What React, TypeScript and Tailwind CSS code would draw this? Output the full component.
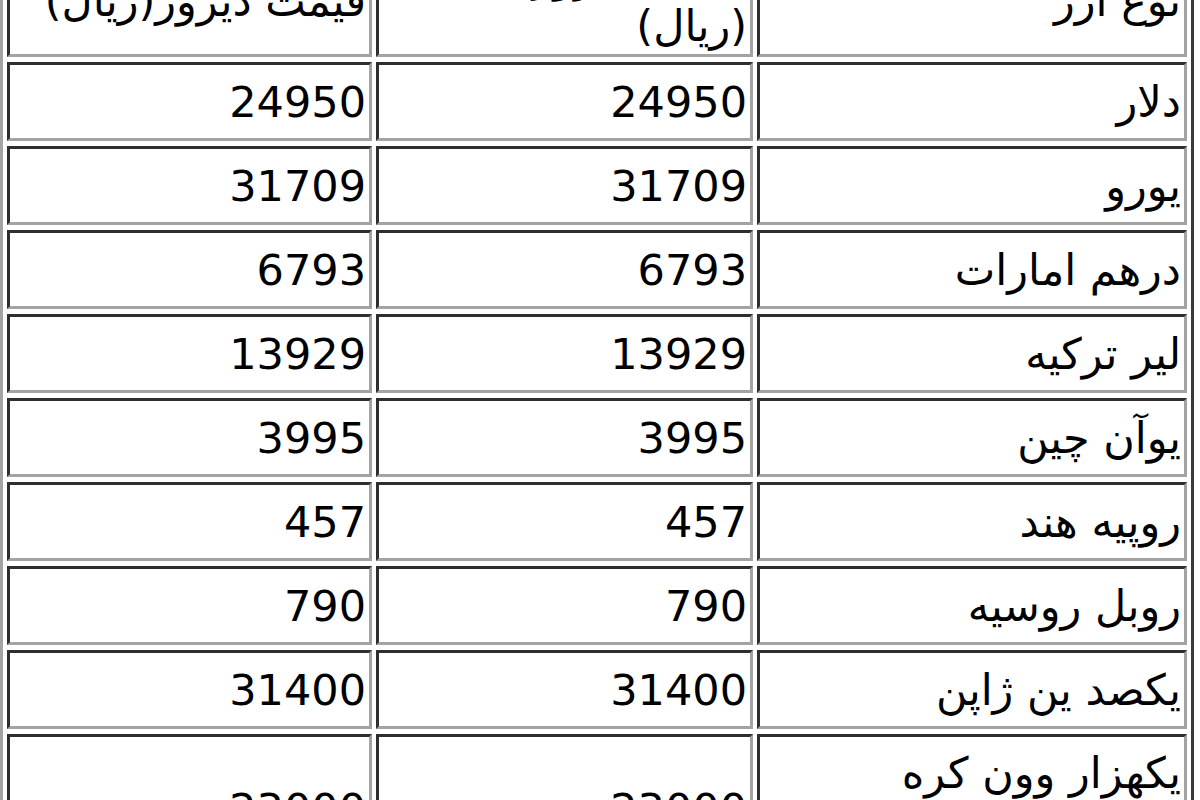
const ROWS: { name: React.ReactNode; today: string; yesterday: string; tall?: boolean }[] = [
  { name: "دلار", today: "24950", yesterday: "24950" },
  { name: "یورو", today: "31709", yesterday: "31709" },
  { name: "درهم امارات", today: "6793", yesterday: "6793" },
  { name: "لیر ترکیه", today: "13929", yesterday: "13929" },
  { name: "یوآن چین", today: "3995", yesterday: "3995" },
  { name: "روپیه هند", today: "457", yesterday: "457" },
  { name: "روبل روسیه", today: "790", yesterday: "790" },
  { name: "یکصد ین ژاپن", today: "31400", yesterday: "31400" },
  {
    name: (
      <>
        یکهزار وون کره
        <br />
        جنوبی
      </>
    ),
    today: "23000",
    yesterday: "23000",
    tall: true,
  },
];

// old-school border=1 table: outset table, inset cells
const cell =
  "border-[3px] border-t-[#2e2e2e] border-r-[#a3a3a3] border-b-[#a3a3a3] border-l-[#2e2e2e] px-[3px] text-right align-middle whitespace-nowrap";

export default function App() {
  return (
    <div className="h-[800px] w-[1200px] overflow-hidden bg-white">
      <table
        dir="rtl"
        className="-mt-[63px] border-separate border-[3px] border-t-[#a3a3a3] border-r-[#3a3a3a] border-b-[#3a3a3a] border-l-[#a3a3a3] [border-spacing:4px_5px] text-[43px] leading-[50px] text-black [font-family:'DejaVu_Sans',Tahoma,sans-serif]"
      >
        <thead>
          <tr>
            <th className={`${cell} h-[112px] w-[430px] font-normal`}>نوع ارز</th>
            <th className={`${cell} h-[112px] w-[377px] font-normal`}>
              قیمت امروز
              <br />
              (ریال)
            </th>
            <th className={`${cell} h-[112px] w-[365px] font-normal`}>قیمت دیروز(ریال)</th>
          </tr>
        </thead>
        <tbody>
          {ROWS.map((r, i) => (
            <tr key={i}>
              <td className={`${cell} h-[79px] ${r.tall ? "pt-[11px] pb-[33px]" : ""}`}>{r.name}</td>
              <td className={`${cell} h-[79px]`}>{r.today}</td>
              <td className={`${cell} h-[79px]`}>{r.yesterday}</td>
            </tr>
          ))}
        </tbody>
      </table>
    </div>
  );
}
